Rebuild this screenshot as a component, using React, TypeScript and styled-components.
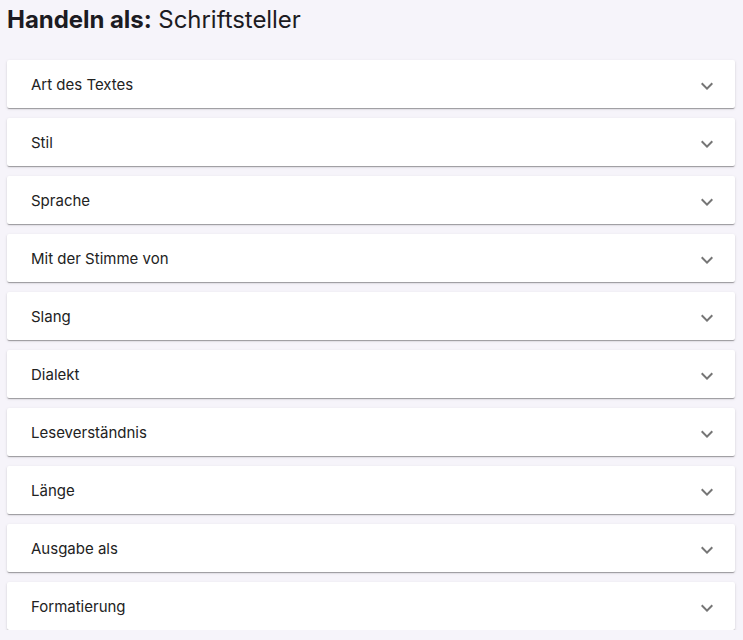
import React from "react";
import styled, { createGlobalStyle } from "styled-components";

const Global = createGlobalStyle`
  html, body { margin: 0; padding: 0; background: #f6f4fa; }
  body { font-family: Inter, "Noto Sans", sans-serif; color: rgba(0,0,0,0.87); }
`;

const Page = styled.div`
  padding: 0 8px 0 7px;
  display: flex;
  flex-direction: column;
`;

const Title = styled.h1`
  margin: 0;
  padding: 6px 0 0 0;
  height: 60px;
  box-sizing: border-box;
  font-size: 24px;
  font-weight: 400;
  line-height: 28px;
  color: #1c1b22;
  letter-spacing: -0.05px;
`;

const Bold = styled.span`
  font-weight: 700;
`;

const List = styled.div`
  display: flex;
  flex-direction: column;
  gap: 10px;
`;

const Card = styled.div`
  background: #fff;
  height: 48px;
  border-radius: 2px;
  box-shadow: 0 2px 1px -1px rgba(0,0,0,0.2), 0 1px 1px 0 rgba(0,0,0,0.14), 0 1px 3px 0 rgba(0,0,0,0.12);
  display: flex;
  align-items: center;
  justify-content: space-between;
  padding: 0 16px 0 24px;
`;

const Label = styled.span`
  font-size: 15px;
  color: #222;
`;

const Icon = styled.svg`
  width: 24px;
  height: 24px;
  fill: rgba(0,0,0,0.54);
  margin-top: 4px;
`;

const items = [
  "Art des Textes",
  "Stil",
  "Sprache",
  "Mit der Stimme von",
  "Slang",
  "Dialekt",
  "Leseverständnis",
  "Länge",
  "Ausgabe als",
  "Formatierung",
];

export default function App() {
  return (
    <>
      <Global />
      <Page>
        <Title>
          <Bold>Handeln als:</Bold> Schriftsteller
        </Title>
        <List>
          {items.map((t) => (
            <Card key={t}>
              <Label>{t}</Label>
              <Icon viewBox="0 0 24 24">
                <path d="M16.59 8.59 12 13.17 7.41 8.59 6 10l6 6 6-6z" />
              </Icon>
            </Card>
          ))}
        </List>
      </Page>
    </>
  );
}
